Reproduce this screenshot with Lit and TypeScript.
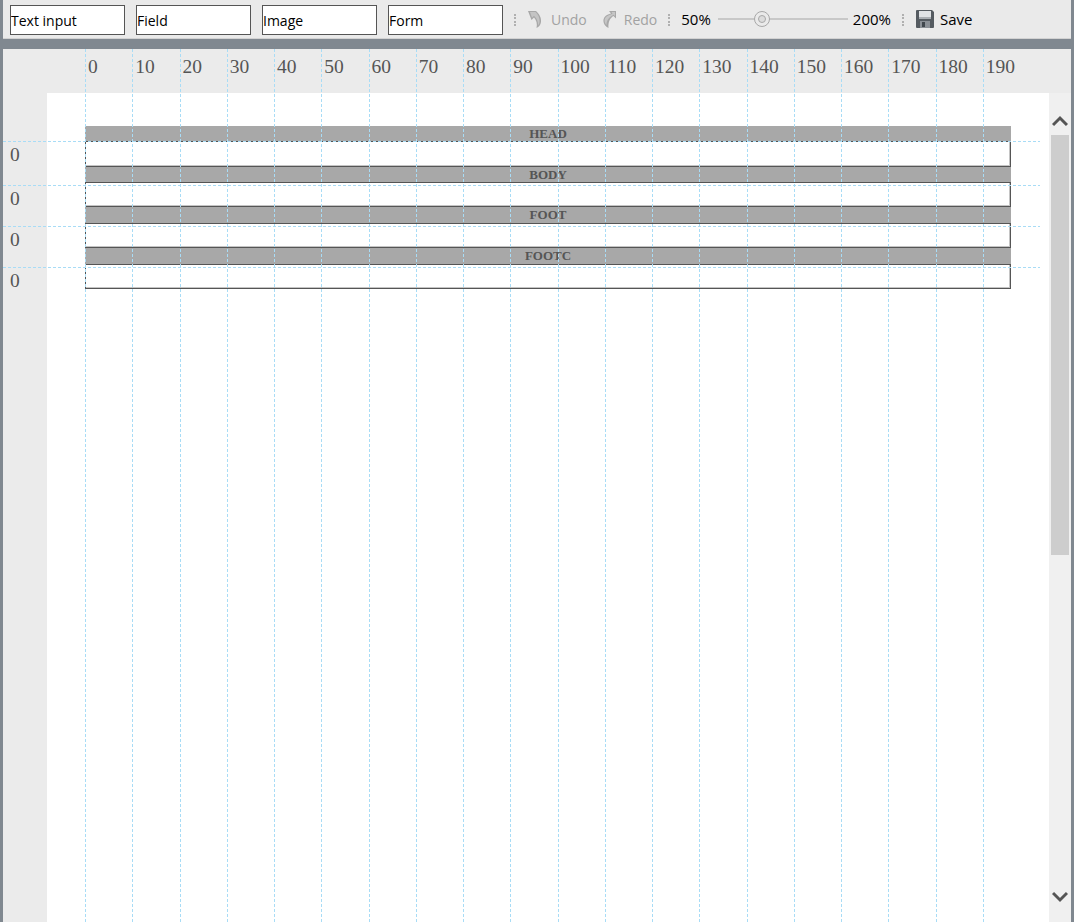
import { LitElement, css, html, svg } from "lit";
import { customElement } from "lit/decorators.js";

const RULER_STEPS = Array.from({ length: 20 }, (_, i) => i * 10);

// height of each strip under the top of the design area
const SECTIONS = [
	{ name: "HEAD", band: 15, box: 26 },
	{ name: "BODY", band: 15, box: 25 },
	{ name: "FOOT", band: 16, box: 25 },
	{ name: "FOOTC", band: 16, box: 25 },
];

const ROWS = [44, 41, 41, 30];

const undoIcon = svg`<path d="M3 1 L11 1 C14.5 4 16.5 8 16 12 C15.6 15 14 17 11.5 18 C12.5 14 11.5 10 9 7.5 L6.5 10 Z" fill="#a8a8a8"/><path d="M5 2 L10.5 2 C13.5 5 15 8.5 14.5 12 C14.3 13.5 13.8 14.5 13.2 15.3 C13.3 12 12 8.5 9 5.8 L7 7.8 Z" fill="#c4c4c4"/>`;
const redoIcon = svg`<path d="M8 1 L15 1 L15 8.5 L12.5 6 C9 8 7 12 7.5 18 C4 16.5 2 13 2.5 9.5 C3 6.5 5.5 4.5 10 3.5 Z" fill="#a8a8a8"/><path d="M10.5 2 L14 2 L14 6 L12.5 4.8 C8 7 5.5 10.5 5.5 15 C4 13.5 3.3 11.5 3.7 9.5 C4.3 7 6.5 5.5 11.5 3.8 Z" fill="#c6c6c6"/>`;
const saveIcon = svg`<path d="M0 1 Q0 0 1 0 L16 0 L18 2 L18 17 Q18 18 17 18 L1 18 Q0 18 0 17 Z" fill="#555b61"/><rect x="3" y="1" width="12" height="8" fill="#dfe2e5"/><rect x="3" y="7" width="12" height="2" fill="#a9aeb3"/><rect x="4" y="11" width="10" height="7" fill="#8b9096"/><rect x="6" y="12" width="3" height="5" fill="#41474d"/>`;

@customElement("app-root")
export class AppRoot extends LitElement {
	static styles = css`
		:host {
			display: block;
			box-sizing: border-box;
			height: 922px;
			padding: 0 3px;
			overflow: hidden;
			background: #808890;
			font-family: "Open Sans", "Noto Sans", sans-serif;
		}

		.toolbar {
			display: flex;
			align-items: center;
			box-sizing: border-box;
			height: 39px;
			padding: 2px 0 0 7px;
			background: #eaeaea;
			border-bottom: 1px solid #d2d2d2;
			font-size: 14px;
			color: #000;
		}

		.field {
			box-sizing: border-box;
			width: 115px;
			height: 30px;
			margin: 0 11px 0 0;
			padding: 0;
			border: 1px solid #555;
			border-radius: 0;
			background: #fff;
			outline: none;
			font: 14px "Open Sans", "Noto Sans", sans-serif;
			color: #000;
		}

		.sep {
			width: 0;
			height: 12px;
			margin-top: -1px;
			border-left: 2px dotted #b0b0b0;
		}

		.tool {
			display: flex;
			align-items: center;
			margin-top: -2px;
		}

		.tool svg {
			display: block;
			flex: none;
		}

		.off {
			color: #a2a2a2;
		}

		.undo {
			margin-left: 9px;
		}

		.undo span {
			margin-left: 9px;
		}

		.redo {
			margin-left: 14px;
		}

		.redo span {
			margin-left: 7px;
		}

		.sep-wide {
			margin-left: 11px;
		}

		.pct {
			margin-top: -2px;
			font-size: 15px;
		}

		.zoom-min {
			margin-left: 11px;
		}

		.slider {
			position: relative;
			width: 130px;
			height: 2px;
			margin: -2px 5px 0 7px;
			background: #c8c8c8;
		}

		.knob {
			position: absolute;
			top: -7px;
			left: 36px;
			box-sizing: border-box;
			width: 16px;
			height: 16px;
			border: 1px solid #a8a8a8;
			border-radius: 50%;
			background: #eaeaea;
		}

		.knob::after {
			content: "";
			position: absolute;
			inset: 3px;
			border: 1px solid #a8a8a8;
			border-radius: 50%;
			background: #dcdcdc;
		}

		.save {
			margin-left: 12px;
			font-size: 15px;
		}

		.save span {
			margin-left: 6px;
		}

		.workspace {
			position: relative;
			display: flex;
			flex-direction: column;
			height: 873px;
			margin-top: 10px;
			background: #ebebeb;
		}

		.ruler-top {
			flex: none;
			height: 44px;
		}

		.middle {
			flex: 1;
			display: flex;
			min-height: 0;
		}

		.ruler-left {
			flex: none;
			width: 44px;
		}

		.page {
			flex: 1;
			padding: 33px 0 0 38px;
			background: #fff;
		}

		.band {
			box-sizing: border-box;
			width: 926px;
			background: #a8a8a8;
			font: bold 13px/16px "Liberation Serif", serif;
			text-align: center;
			color: #555;
		}

		.box {
			box-sizing: border-box;
			width: 926px;
			border: 1px solid #555;
			background: #fff;
			box-shadow:
				inset 0 -1px 0 #c4c4c4,
				inset -1px 0 0 #c4c4c4;
		}

		.scrollbar {
			flex: none;
			display: flex;
			flex-direction: column;
			align-items: center;
			width: 22px;
			background: #f0f0f0;
		}

		.scrollbar svg {
			display: block;
			flex: none;
		}

		.arrow-up {
			margin-top: 22px;
		}

		.thumb {
			flex: none;
			width: 18px;
			height: 420px;
			margin-top: 8px;
			background: #cdcdcd;
		}

		.arrow-down {
			margin-top: auto;
			margin-bottom: 19px;
		}

		.guides-v {
			position: absolute;
			top: 0;
			bottom: 0;
			left: 82px;
			display: flex;
			pointer-events: none;
		}

		.guide-v {
			box-sizing: border-box;
			flex: none;
			width: 47.25px;
			padding: 5px 0 0 3px;
			background: linear-gradient(#a8dcf6 60%, transparent 60%) left top / 1px 5px repeat-y;
			font: 19.5px/25px "Liberation Serif", serif;
			color: #555;
		}

		.guides-h {
			position: absolute;
			top: 92px;
			left: 0;
			width: 1037px;
			pointer-events: none;
		}

		.guide-h {
			box-sizing: border-box;
			padding: 2px 0 0 7px;
			background: linear-gradient(90deg, #a8dcf6 60%, transparent 60%) left top / 5px 1px repeat-x;
			font: 19.5px/24px "Liberation Serif", serif;
			color: #555;
		}
	`;

	render() {
		return html`
			<div class="toolbar">
				<input class="field" value="Text input" />
				<input class="field" value="Field" />
				<input class="field" value="Image" />
				<input class="field" value="Form" />
				<div class="sep"></div>
				<div class="tool off undo">
					<svg width="17" height="19" viewBox="0 0 17 19">${undoIcon}</svg>
					<span>Undo</span>
				</div>
				<div class="tool off redo">
					<svg width="16" height="19" viewBox="0 0 16 19">${redoIcon}</svg>
					<span>Redo</span>
				</div>
				<div class="sep sep-wide"></div>
				<div class="pct zoom-min">50%</div>
				<div class="slider"><div class="knob"></div></div>
				<div class="pct">200%</div>
				<div class="sep sep-wide"></div>
				<div class="tool save">
					<svg width="18" height="18" viewBox="0 0 18 18">${saveIcon}</svg>
					<span>Save</span>
				</div>
			</div>
			<div class="workspace">
				<div class="ruler-top"></div>
				<div class="middle">
					<div class="ruler-left"></div>
					<div class="page">
						${SECTIONS.map(
							(s) => html`
								<div class="band" style="height:${s.band}px">${s.name}</div>
								<div class="box" style="height:${s.box}px"></div>
							`,
						)}
					</div>
					<div class="scrollbar">
						<svg class="arrow-up" width="16" height="12" viewBox="0 0 16 12">
							<path d="M1 10 L8 3 L15 10" fill="none" stroke="#555" stroke-width="3" />
						</svg>
						<div class="thumb"></div>
						<svg class="arrow-down" width="16" height="12" viewBox="0 0 16 12">
							<path d="M1 2 L8 9 L15 2" fill="none" stroke="#555" stroke-width="3" />
						</svg>
					</div>
				</div>
				<div class="guides-v">
					${RULER_STEPS.map((n) => html`<div class="guide-v">${n}</div>`)}
				</div>
				<div class="guides-h">
					${ROWS.map((h) => html`<div class="guide-h" style="height:${h}px">0</div>`)}
				</div>
			</div>
		`;
	}
}
